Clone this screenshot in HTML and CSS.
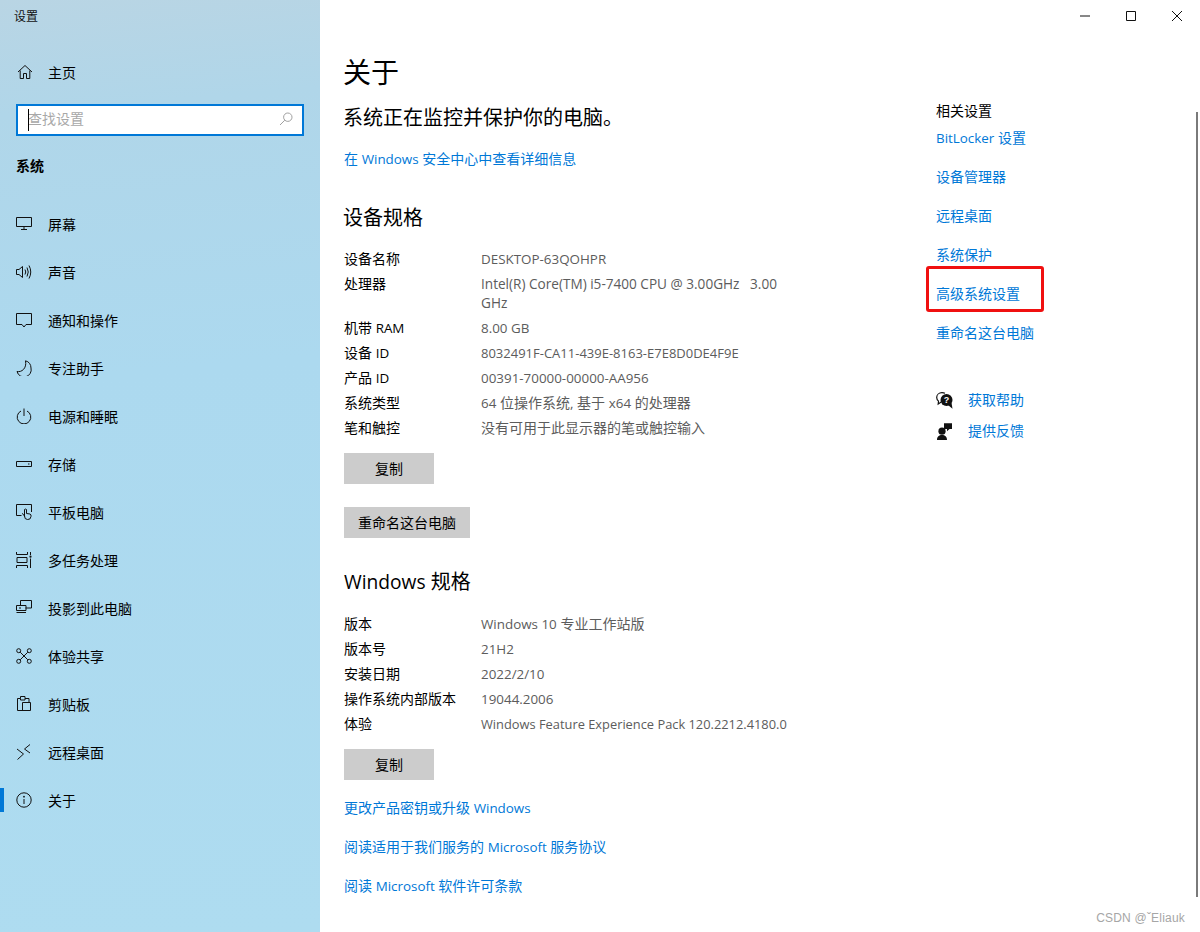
FILE: index.html
```html
<!DOCTYPE html>
<html lang="zh-CN">
<head>
<meta charset="utf-8">
<title>设置</title>
<link rel="stylesheet" href="styles.css">
</head>
<body>
<div class="window">
  <aside class="sidebar">
    <div class="app-title">设置</div>
    <a class="home">
      <svg class="ico" viewBox="0 0 16 16"><path d="M1 8 8 1.5 15 8M3.2 6.5V14.5H6.5V9.5H9.5V14.5H12.8V6.5"/></svg>
      <span>主页</span>
    </a>
    <div class="search">
      <i class="caret"></i><span class="placeholder">查找设置</span>
      <svg class="search-ico" viewBox="0 0 14 14"><circle cx="8.8" cy="5.2" r="4.2"/><path d="M5.8 8.2 1 13"/></svg>
    </div>
    <div class="group">系统</div>
    <nav class="nav">
      <a class="nav-item"><svg class="ico" viewBox="0 0 16 16"><path d="M.5 1.5H15.5V10.5H.5ZM8 10.5V13.5M5 13.5H11"/></svg><span>屏幕</span></a>
      <a class="nav-item"><svg class="ico" viewBox="0 0 16 16"><path d="M.5 5.5H3L6.5 2.5V13.5L3 10.5H.5ZM9 5.5Q10.5 8 9 10.5M11 3.5Q13.5 8 11 12.5M13 1.5Q16.5 8 13 14.5"/></svg><span>声音</span></a>
      <a class="nav-item"><svg class="ico" viewBox="0 0 16 16"><path d="M.5 1.5H15.5V12.5H10L8 15 6 12.5H.5Z"/></svg><span>通知和操作</span></a>
      <a class="nav-item"><svg class="ico" viewBox="0 0 16 16"><path d="M9.5 .8C13 1.6 15 4.5 15 8A7 7 0 0 1 1 11.5C5.5 12.5 11 8.5 9.5 .8Z"/></svg><span>专注助手</span></a>
      <a class="nav-item"><svg class="ico" viewBox="0 0 16 16"><path d="M8 .5V8M5 3A6.8 6.8 0 1 0 11 3"/></svg><span>电源和睡眠</span></a>
      <a class="nav-item"><svg class="ico" viewBox="0 0 16 16"><path d="M.5 5.5H15.5V10.5H.5ZM12 8H13.5"/></svg><span>存储</span></a>
      <a class="nav-item"><svg class="ico" viewBox="0 0 16 16"><path d="M5.5 11.5H.5V.5H15.5V8M6 9.5Q8 10 8.5 12.5M8.5 12V5.5Q10 4.5 10.5 5.5V9.5L14 10Q15.5 10.5 15 12.5 14.5 16 11.5 15.5 8.5 15.5 8.5 12"/></svg><span>平板电脑</span></a>
      <a class="nav-item"><svg class="ico" viewBox="0 0 16 16"><path d="M.5 0V2.5H11.5V0M.5 16V13.5H11.5V16M1 5.5H11V10.5H1ZM14.5 0V3M14.5 6.5V16"/><circle class="fill" cx="14.5" cy="4.7" r="1.1"/></svg><span>多任务处理</span></a>
      <a class="nav-item"><svg class="ico" viewBox="0 0 16 16"><path d="M4.5 5V.5H15.5V8H9.5M.5 5.5H10V10.5H.5ZM.5 12.5H10M3 8H5"/></svg><span>投影到此电脑</span></a>
      <a class="nav-item"><svg class="ico" viewBox="0 0 16 16"><circle cx="2.7" cy="2.7" r="2"/><circle cx="13.3" cy="2.7" r="2"/><circle cx="2.7" cy="13.3" r="2"/><circle cx="13.3" cy="13.3" r="2"/><path d="M4.2 4.2 11.8 11.8M11.8 4.2 4.2 11.8"/></svg><span>体验共享</span></a>
      <a class="nav-item"><svg class="ico" viewBox="0 0 16 16"><path d="M1.5 14.5V2.5H4.5V.5H9V2.5H13V6M4.5 2.5V4H9V2.5M6.5 6.5H14.5V14.5H1.5M6.5 6.5V14.5"/></svg><span>剪贴板</span></a>
      <a class="nav-item"><svg class="ico" viewBox="0 0 16 16"><path d="M1 5 7.5 10 1.5 15.5M14 .5 8.5 5 14 9"/></svg><span>远程桌面</span></a>
      <a class="nav-item active"><svg class="ico" viewBox="0 0 16 16"><circle cx="8" cy="8" r="7.2"/><path d="M8 7V12"/><circle class="fill" cx="8" cy="4.7" r=".9"/></svg><span>关于</span></a>
    </nav>
  </aside>

  <main class="main">
    <div class="content">
      <h1 class="page-title">关于</h1>
      <p class="status">系统正在监控并保护你的电脑。</p>
      <a class="link details-link">在 <span class="lat">Windows</span> 安全中心中查看详细信息</a>

      <h2 class="section cjk-section">设备规格</h2>
      <dl class="spec">
        <div class="row"><dt>设备名称</dt><dd><span class="lat">DESKTOP-63QOHPR</span></dd></div>
        <div class="row"><dt>处理器</dt><dd><span class="lat-lg">Intel(R) Core(TM) i5-7400 CPU @ 3.00GHz&nbsp;&nbsp;&nbsp;3.00 GHz</span></dd></div>
        <div class="row"><dt>机带 <span class="lat">RAM</span></dt><dd><span class="lat">8.00 GB</span></dd></div>
        <div class="row"><dt>设备 <span class="lat">ID</span></dt><dd><span class="lat-sm">8032491F-CA11-439E-8163-E7E8D0DE4F9E</span></dd></div>
        <div class="row"><dt>产品 <span class="lat">ID</span></dt><dd><span class="lat">00391-70000-00000-AA956</span></dd></div>
        <div class="row"><dt>系统类型</dt><dd><span class="lat">64</span> 位操作系统<span class="lat">,</span> 基于 <span class="lat">x64</span> 的处理器</dd></div>
        <div class="row"><dt>笔和触控</dt><dd>没有可用于此显示器的笔或触控输入</dd></div>
      </dl>
      <button class="btn btn-copy">复制</button>
      <button class="btn btn-rename">重命名这台电脑</button>

      <h2 class="section win-section"><span class="lat-head">Windows</span> 规格</h2>
      <dl class="spec win-spec">
        <div class="row"><dt>版本</dt><dd><span class="lat">Windows 10</span> 专业工作站版</dd></div>
        <div class="row"><dt>版本号</dt><dd><span class="lat">21H2</span></dd></div>
        <div class="row"><dt>安装日期</dt><dd><span class="lat">2022/2/10</span></dd></div>
        <div class="row"><dt>操作系统内部版本</dt><dd><span class="lat">19044.2006</span></dd></div>
        <div class="row"><dt>体验</dt><dd><span class="lat-xs">Windows Feature Experience Pack 120.2212.4180.0</span></dd></div>
      </dl>
      <button class="btn btn-copy">复制</button>
      <div class="bottom-links">
        <a class="link">更改产品密钥或升级 <span class="lat">Windows</span></a>
        <a class="link">阅读适用于我们服务的 <span class="lat">Microsoft</span> 服务协议</a>
        <a class="link">阅读 <span class="lat">Microsoft</span> 软件许可条款</a>
      </div>
    </div>

    <aside class="related">
      <div class="related-title">相关设置</div>
      <div class="related-links">
        <a class="link"><span class="lat">BitLocker</span> 设置</a>
        <a class="link">设备管理器</a>
        <a class="link">远程桌面</a>
        <a class="link">系统保护</a>
        <a class="link highlighted">高级系统设置</a>
        <a class="link">重命名这台电脑</a>
      </div>
      <div class="help">
        <a class="link help-item">
          <svg class="help-ico" viewBox="0 0 17 17"><path class="thin" d="M9 1.2C8 .8 7 .7 6 .7 3 .7.7 2.8.7 5.5c0 1.5.7 2.7 1.8 3.6L2.2 12l3-2"/><circle class="solid" cx="10.5" cy="8" r="6"/><path class="solid" d="M12 13l4.5 3.7-1-6z"/><text class="q" x="10.5" y="11.4">?</text></svg>
          <span>获取帮助</span>
        </a>
        <a class="link help-item">
          <svg class="help-ico" viewBox="0 0 17 17"><circle class="solid" cx="6" cy="8.2" r="3.6"/><path class="solid" d="M1 17C1 13.5 3 12 6 12S11 13.5 11 17ZM8 .3H16V6H13.5L11 8.2V6H8Z"/></svg>
          <span>提供反馈</span>
        </a>
      </div>
    </aside>
  </main>

  <div class="win-controls">
    <svg class="win-btn" viewBox="0 0 10 10"><path d="M0 5H10"/></svg>
    <svg class="win-btn" viewBox="0 0 10 10"><path d="M.5 .5H9.5V9.5H.5Z"/></svg>
    <svg class="win-btn" viewBox="0 0 10 10"><path d="M0 0 10 10M10 0 0 10"/></svg>
  </div>
  <div class="scrollbar"></div>
  <div class="watermark">CSDN @ˇEliauk</div>
</div>
</body>
</html>
```
FILE: styles.css
```css
* { box-sizing: border-box; }
html, body { margin: 0; padding: 0; }
body {
  width: 1200px;
  height: 932px;
  overflow: hidden;
  background: #fff;
  color: #000;
  font-family: "Open Sans", "Noto Sans CJK SC", sans-serif;
  font-size: 14px;
}
a { text-decoration: none; color: inherit; display: block; }
.lat, .lat-sm, .lat-xs, .lat-lg, .lat-head { line-height: 1; }
.lat { font-size: 13.4px; }
.lat-lg { font-size: 13.6px; }
.lat-sm { font-size: 13px; }
.lat-xs { font-size: 12.85px; }
.lat-head { font-size: 19.2px; }
.window { position: relative; display: flex; width: 1200px; height: 932px; }

.sidebar {
  width: 320px;
  flex: none;
  padding-top: 9px;
  background: linear-gradient(175deg, #b9d5e4 0, #b0d6e9 12%, #acd9ef 40%, #aedcf0 100%);
}
.app-title { font-size: 12px; line-height: 16px; padding-left: 14px; color: #111; }
.home { display: flex; align-items: center; height: 48px; margin-top: 23px; padding-left: 17px; }
.home .ico { width: 16px; height: 16px; margin-right: 15px; }
.ico { width: 16px; height: 16px; flex: none; fill: none; stroke: #111; stroke-width: 1; }
.ico .fill { fill: #111; stroke: none; }
.search {
  display: flex;
  align-items: center;
  position: relative;
  width: 288px;
  height: 32px;
  margin: 8px 0 0 16px;
  padding: 0 10px 2px;
  background: #fff;
  border: 2px solid #0078d7;
}
.caret { position: absolute; left: 10px; top: 3px; width: 1px; height: 22px; background: #000; }
.placeholder { color: #a8a8a8; line-height: 20px; }
.search-ico { width: 14px; height: 14px; margin-left: auto; margin-right: -1px; fill: none; stroke: #a0a0a0; stroke-width: 1; }
.group { margin: 20px 0 0 16px; font-size: 14px; font-weight: 700; line-height: 20px; }
.nav { margin-top: 24px; }
.nav-item { position: relative; display: flex; align-items: center; height: 48px; padding-left: 16px; }
.nav-item .ico { margin-right: 16px; }
.nav-item.active::before { content: ""; position: absolute; left: 0; top: 12px; width: 4px; height: 24px; background: #0078d7; }

.main { flex: 1; display: flex; padding-left: 24px; min-width: 0; }
.content { width: 582px; flex: none; padding-top: 48px; }
.page-title { margin: 0 0 0 -1px; font-size: 28px; font-weight: 400; line-height: 48px; }
.status { margin: 9px 0 0 -1px; font-size: 20px; line-height: 26px; height: 24px; }
.link { color: #0078d7; line-height: 20px; }
.details-link { margin-top: 20px; }
.section { margin: 35px 0 0; font-size: 20px; font-weight: 400; line-height: 28px; }
.cjk-section { margin-left: -1px; }
.spec { margin: 17px 0 0; width: 450px; }
.win-spec { margin-top: 18px; }
.row { display: flex; padding: 0 0 5px; line-height: 20px; }
.row dt { width: 137px; flex: none; }
.row dd { margin: 0; flex: 1; color: #5c5c5c; line-height: 19px; padding-bottom: 1px; }
.btn {
  display: block;
  height: 31px;
  padding: 0;
  border: 0;
  background: #ccc;
  color: #000;
  font: inherit;
  line-height: 31px;
}
.btn-copy { width: 90px; margin-top: 10px; }
.btn-rename { width: 126px; margin-top: 23px; }
.win-section { margin-top: 30px; }
.bottom-links { margin-top: 18px; display: flex; flex-direction: column; gap: 19px; }

.related { padding: 93px 0 0 0; margin-left: 10px; flex: 1; }
.related-title { line-height: 20px; margin-top: 8px; }
.related-links { margin-top: 7px; display: flex; flex-direction: column; gap: 19px; }
.highlighted { position: relative; }
.highlighted::after {
  content: "";
  position: absolute;
  left: -10px;
  top: -18px;
  width: 112px;
  height: 40px;
  border: 3px solid #f01010;
  border-radius: 3px;
}
.help { margin-top: 47px; display: flex; flex-direction: column; gap: 11px; }
.help-item { display: flex; align-items: center; }
.help-ico { width: 17px; height: 17px; flex: none; margin-right: 15px; }
.help-ico .solid { fill: #111; stroke: none; }
.help-ico .thin { fill: none; stroke: #111; stroke-width: 1.2; }
.help-ico .q { fill: #fff; font-size: 9px; font-weight: 700; text-anchor: middle; font-family: "Liberation Sans", sans-serif; }

.win-controls { position: absolute; top: 11px; right: 18px; display: flex; gap: 36px; }
.win-btn { width: 10px; height: 10px; fill: none; stroke: #111; stroke-width: 1; }
.scrollbar { position: absolute; right: 2px; top: 112px; width: 2px; height: 785px; background: #7a7a7a; }
.watermark { position: absolute; right: 15px; top: 910px; font-family: "Liberation Sans", sans-serif; font-size: 12px; line-height: 16px; color: #a6a6a6; letter-spacing: .2px; }
```
